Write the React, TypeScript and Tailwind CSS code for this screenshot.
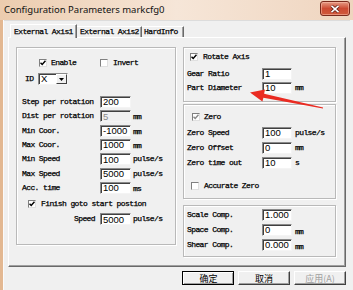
import React from "react";

const mono = "font-['Liberation_Mono',monospace] text-[8px] tracking-[-0.6px] text-black [-webkit-text-stroke:0.25px_#000] leading-none whitespace-nowrap";
const sans = "font-['Liberation_Sans',Arial,sans-serif] text-[9.5px] leading-none";

function Check({ checked, disabled }: { checked?: boolean; disabled?: boolean }) {
  return (
    <div className="w-[8px] h-[8px] shrink-0 bg-white border border-t-[#808080] border-l-[#808080] border-r-[#e0e0e0] border-b-[#e0e0e0] flex items-center justify-center">
      {checked && (
        <svg width="6" height="6" viewBox="0 0 6 6">
          <path d="M0.5 2.8 L2.2 4.5 L5.5 0.8" stroke={disabled ? "#8a8a8a" : "#000"} strokeWidth="1.5" fill="none" />
        </svg>
      )}
    </div>
  );
}

function Input({ value, w = "w-[31px]", disabled }: { value: string; w?: string; disabled?: boolean }) {
  return (
    <div
      className={`${w} h-[12px] shrink-0 ${disabled ? "bg-[#f0f0f0] text-[#8a8a8a]" : "bg-white text-black"} border border-t-[#8a8a8a] border-l-[#8a8a8a] border-r-[#f4f4f4] border-b-[#f4f4f4] shadow-[inset_1px_1px_0_#404040] flex items-center pl-[2px] ${sans}`}
    >
      {value}
    </div>
  );
}

function LRow({ label, value, unit, disabled, right }: { label: string; value: string; unit?: string; disabled?: boolean; right?: boolean }) {
  return (
    <div className="h-[14.33px] flex items-center pl-[5px]">
      <div className={`w-[78px] ${mono} ${right ? "text-right pr-[5px]" : ""}`}>{label}</div>
      <Input value={value} disabled={disabled} />
      {unit && <div className={`ml-[2px] ${mono} ${unit === "mm" || unit === "ms" ? "mt-[2px] text-[7px] tracking-[-0.8px]" : ""}`}>{unit}</div>}
    </div>
  );
}

function RRow({ label, value, unit, h = "h-[14px]", low }: { label: string; value: string; unit?: string; h?: string; low?: boolean }) {
  return (
    <div className={`${h} flex items-center pl-[3px]`}>
      <div className={`w-[75px] ${mono}`}>{label}</div>
      <Input value={value} w="w-[30px]" />
      {unit && <div className={`ml-[3px] ${mono} ${low ? "mt-[4px]" : ""} ${unit === "mm" || unit === "s" ? "text-[7px] tracking-[-0.8px]" : ""}`}>{unit}</div>}
    </div>
  );
}

const group = "border border-[#b9b9b9] shadow-[1px_1px_0_#ffffff,inset_1px_1px_0_#ffffff]";

function Btn({ label, def, disabled }: { label: string; def?: boolean; disabled?: boolean }) {
  return (
    <div
      className={`w-[52px] h-[14px] flex items-center justify-center bg-[#f0f0f0] border ${def ? "border-black" : "border-t-white border-l-white border-r-[#404040] border-b-[#404040]"} shadow-[inset_-1px_-1px_0_#a0a0a0] font-['Noto_Sans_CJK_SC','Noto_Sans',sans-serif] text-[9px] leading-none ${disabled ? "text-[#a0a0a0]" : "text-black"}`}
    >
      <div className={def ? "border-t border-l border-white w-full h-full flex items-center justify-center shadow-[inset_-1px_-1px_0_#a0a0a0]" : ""}>{label}</div>
    </div>
  );
}

export default function App() {
  return (
    <div className="w-[353px] h-[290px] relative overflow-hidden bg-[#e9c6a4] flex flex-col">
      {/* title bar */}
      <div className="h-[20px] shrink-0 flex items-start justify-between bg-gradient-to-r from-[#ecccae] via-[#f6e6d8] to-[#efd5bf] pl-[4px]">
        <div className="mt-[5px] font-['Noto_Sans',sans-serif] text-[9.5px] text-[#111] leading-none">Configuration Parameters markcfg0</div>
        <div className="mt-[1px] mr-[3px] w-[30px] h-[15px] rounded-[3px] border border-[#7a2a1c] bg-gradient-to-b from-[#e49a84] via-[#cc4a32] to-[#d05a3c] shadow-[inset_0_0_0_1px_rgba(255,200,180,0.5)] flex items-center justify-center">
          <svg width="10" height="8" viewBox="0 0 10 8">
            <path d="M1.5 0.8 L8.5 7.2 M8.5 0.8 L1.5 7.2" stroke="#5a1a10" strokeWidth="3" />
            <path d="M1.5 0.8 L8.5 7.2 M8.5 0.8 L1.5 7.2" stroke="#ffffff" strokeWidth="1.6" />
          </svg>
        </div>
      </div>
      <div className="flex flex-1">
        <div className="w-[3px] bg-[#e3b892]" />
        <div className="w-[1px] bg-[#fbfbfb]" />
        <div className="flex-1 bg-[#f0f0f0] border-t border-[#dcdcdc] flex flex-col pl-[4px]">
          {/* tabs */}
          <div className="h-[16px] flex items-end pl-[2px] mt-[0px]">
            <div className={`relative z-10 -mb-[1px] w-[67px] h-[14px] bg-[#f0f0f0] border-t border-l border-white border-r border-r-[#696969] shadow-[inset_-1px_0_0_#a0a0a0] flex items-center pl-[3px] ${mono}`}>
              External Axis1
            </div>
            <div className={`w-[65px] h-[11px] border-t border-white border-r border-r-[#696969] shadow-[inset_-1px_0_0_#a0a0a0] flex items-center pl-[3px] ${mono}`}>
              External Axis2
            </div>
            <div className={`w-[42px] h-[11px] border-t border-white border-r border-r-[#696969] shadow-[inset_-1px_0_0_#a0a0a0] flex items-center pl-[2px] ${mono}`}>
              HardInfo
            </div>
          </div>
          {/* panel */}
          <div className="w-[338px] h-[230px] border border-t-white border-l-white border-r-[#696969] border-b-[#696969] shadow-[inset_-1px_-1px_0_#a0a0a0] flex pl-[7px] pt-[9px] gap-[7px]">
            {/* left group */}
            <div className={`w-[160px] h-[198px] ${group} flex flex-col`}>
              <div className="mt-[9px] h-[12px] flex items-center pl-[22px]">
                <div className="w-[61px] flex items-center gap-[4px]">
                  <Check checked />
                  <span className={mono}>Enable</span>
                </div>
                <div className="flex items-center gap-[5px]">
                  <Check />
                  <span className={mono}>Invert</span>
                </div>
              </div>
              <div className="mt-[4px] h-[12px] flex items-center pl-[8px]">
                <div className={`w-[13px] ${mono}`}>ID</div>
                <div className="w-[30px] h-[12px] bg-white border border-t-[#8a8a8a] border-l-[#8a8a8a] border-r-[#f4f4f4] border-b-[#f4f4f4] shadow-[inset_1px_1px_0_#404040] flex items-center">
                  <div className={`flex-1 pl-[2px] ${sans}`}>X</div>
                  <div className="w-[11px] h-[10px] bg-[#f0f0f0] border border-t-white border-l-white border-r-[#404040] border-b-[#404040] flex items-center justify-center">
                    <svg width="5" height="3" viewBox="0 0 5 3"><path d="M0 0 H5 L2.5 3 Z" fill="#000" /></svg>
                  </div>
                </div>
              </div>
              <div className="mt-[10px] flex flex-col">
                <LRow label="Step per rotation" value="200" />
                <LRow label="Dist per rotation" value="5" unit="mm" disabled />
                <LRow label="Min Coor." value="-1000" unit="mm" />
                <LRow label="Max Coor." value="1000" unit="mm" />
                <LRow label="Min Speed" value="100" unit="pulse/s" />
                <LRow label="Max Speed" value="5000" unit="pulse/s" />
                <LRow label="Acc. time" value="100" unit="ms" />
              </div>
              <div className="mt-[3px] h-[12px] flex items-center pl-[11px] gap-[5px]">
                <Check checked />
                <span className={mono}>Finish goto start postion</span>
              </div>
              <div className="mt-[2px]">
                <LRow label="Speed" value="5000" unit="pulse/s" right />
              </div>
            </div>
            {/* right column */}
            <div className="w-[153px] flex flex-col">
              <div className={`h-[55px] ${group} flex flex-col`}>
                <div className="mt-[3px] h-[12px] flex items-center pl-[6px] gap-[5px]">
                  <Check checked />
                  <span className={mono}>Rotate Axis</span>
                </div>
                <div className="mt-[4px]">
                  <RRow label="Gear Ratio" value="1" />
                  <RRow label="Part Diameter" value="10" unit="mm" />
                </div>
              </div>
              <div className={`mt-[2px] h-[95px] ${group} flex flex-col`}>
                <div className="mt-[6px] h-[12px] flex items-center pl-[8px] gap-[4px]">
                  <Check checked disabled />
                  <span className={mono}>Zero</span>
                </div>
                <div className="mt-[2px]">
                  <RRow label="Zero Speed" value="100" unit="pulse/s" h="h-[15px]" />
                  <RRow label="Zero Offset" value="0" unit="mm" h="h-[15px]" />
                  <RRow label="Zero time out" value="10" unit="s" h="h-[15px]" />
                </div>
                <div className="mt-[10px] h-[12px] flex items-center pl-[7px] gap-[5px]">
                  <Check />
                  <span className={mono}>Accurate Zero</span>
                </div>
              </div>
              <div className={`mt-[6px] h-[52px] ${group} flex flex-col`}>
                <div className="mt-[1px]">
                  <RRow label="Scale Comp." value="1.000" h="h-[15px]" />
                  <RRow label="Space Comp." value="0" unit="mm" h="h-[15px]" low />
                  <RRow label="Shear Comp." value="0.000" unit="mm" h="h-[15px]" low />
                </div>
              </div>
            </div>
          </div>
          {/* buttons */}
          <div className="mt-[4px] flex gap-[4px] pl-[174px]">
            <Btn label="确定" def />
            <Btn label="取消" />
            <Btn label="应用(A)" disabled />
          </div>
        </div>
        <div className="w-[3px] bg-[#f0f0f0]" />
      </div>
      {/* red arrow annotation */}
      <svg className="absolute left-0 top-0 pointer-events-none" width="353" height="290" viewBox="0 0 353 290">
        <polygon
          points="250,92.5 265,89.6 264.1,93.7 323.1,107.4 322.9,108.6 263.4,97.7 262.4,101.6"
          fill="#ea2b22"
        />
      </svg>
    </div>
  );
}
